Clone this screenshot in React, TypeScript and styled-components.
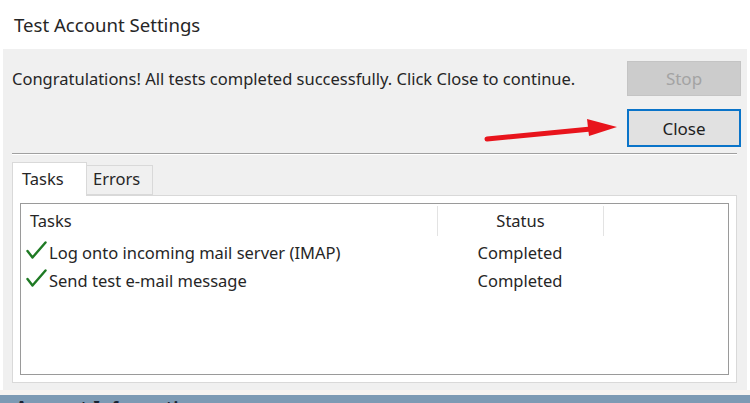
import styled, { createGlobalStyle } from 'styled-components';

const GlobalStyle = createGlobalStyle`
  html, body {
    margin: 0;
    padding: 0;
    background: #ffffff;
  }
  body {
    font-family: "Noto Sans", "Open Sans", sans-serif;
    color: #1e1e1e;
  }
`;

interface Task {
  name: string;
  status: string;
}

const tasks: Task[] = [
  { name: 'Log onto incoming mail server (IMAP)', status: 'Completed' },
  { name: 'Send test e-mail message', status: 'Completed' },
];

const CheckIcon = () => (
  <svg width="21" height="19" viewBox="0 0 21 19">
    <path
      d="M1.5 10 L6.5 16.5 L19.5 1.5"
      fill="none"
      stroke="#1f7a24"
      strokeWidth="2.4"
      strokeLinecap="round"
      strokeLinejoin="round"
    />
  </svg>
);

const App = () => {
  return (
    <>
      <GlobalStyle />
      <Page>
        <TitleBar>Test Account Settings</TitleBar>
        <Dialog>
          <TopRow>
            <Message>
              Congratulations! All tests completed successfully. Click Close to continue.
            </Message>
            <Buttons>
              <Button disabled>Stop</Button>
              <Button $primary>Close</Button>
            </Buttons>
            <Arrow width="140" height="30" viewBox="0 0 140 30">
              <path d="M4 24 L108 14" stroke="#e8141c" strokeWidth="5" strokeLinecap="round" />
              <path d="M104 4 L134 12 L106 21 Z" fill="#e8141c" />
            </Arrow>
          </TopRow>
          <Separator />
          <TabStrip>
            <Tab $active>Tasks</Tab>
            <Tab>Errors</Tab>
          </TabStrip>
          <TabPanel>
            <ListBox>
              <HeaderRow>
                <HeadCell>Tasks</HeadCell>
                <HeadCell $center $divider>Status</HeadCell>
                <HeadCell $divider />
              </HeaderRow>
              {tasks.map((t) => (
                <Row key={t.name}>
                  <NameCell>
                    <CheckIcon />
                    <span>{t.name}</span>
                  </NameCell>
                  <StatusCell>{t.status}</StatusCell>
                  <div />
                </Row>
              ))}
            </ListBox>
          </TabPanel>
        </Dialog>
        <Footer>
          <FooterText>Account Information</FooterText>
        </Footer>
      </Page>
    </>
  );
};

export default App;

const Page = styled.div`
  width: 750px;
  height: 403px;
  overflow: hidden;
  display: flex;
  flex-direction: column;
`;

const TitleBar = styled.div`
  height: 49px;
  box-sizing: border-box;
  padding: 12px 0 0 14px;
  font-size: 18.6px;
  color: #262626;
`;

const Dialog = styled.div`
  margin: 0 3px;
  background: #f0f0f0;
  display: flex;
  flex-direction: column;
  padding: 12px 6px 7px 9px;
`;

const TopRow = styled.div`
  position: relative;
  display: flex;
  justify-content: space-between;
  align-items: flex-start;
`;

const Message = styled.div`
  font-size: 16.5px;
  line-height: 22px;
  margin-top: 7px;
  color: #262626;
`;

const Buttons = styled.div`
  display: flex;
  flex-direction: column;
  gap: 13px;
`;

const Button = styled.button<{ $primary?: boolean }>`
  width: 114px;
  height: ${(p) => (p.$primary ? '38px' : '35px')};
  box-sizing: border-box;
  font-family: "Noto Sans", "Open Sans", sans-serif;
  font-size: 17px;
  background: ${(p) => (p.$primary ? '#e1e1e1' : '#cccccc')};
  color: ${(p) => (p.$primary ? '#1e1e1e' : '#a3a3a3')};
  border: ${(p) => (p.$primary ? '2px solid #0a74c9' : '1px solid #c4c4c4')};
  padding: 0;
`;

const Arrow = styled.svg`
  position: absolute;
  left: 471px;
  top: 54px;
`;

const Separator = styled.div`
  margin: 6px 4px 0 0;
  height: 1px;
  background: #a0a0a0;
  border-bottom: 1px solid #ffffff;
`;

const TabStrip = styled.div`
  display: flex;
  align-items: flex-end;
  margin: 7px 0 0 0;
  height: 33px;
`;

const Tab = styled.div<{ $active?: boolean }>`
  box-sizing: border-box;
  width: ${(p) => (p.$active ? '75px' : '66px')};
  height: ${(p) => (p.$active ? '34px' : '30px')};
  margin-bottom: ${(p) => (p.$active ? '-1px' : '0')};
  padding: ${(p) => (p.$active ? '4px 0 0 9px' : '1px 0 0 6px')};
  background: ${(p) => (p.$active ? '#ffffff' : '#f0f0f0')};
  border: 1px solid #d9d9d9;
  border-bottom: ${(p) => (p.$active ? 'none' : '1px solid #d9d9d9')};
  border-left: ${(p) => (p.$active ? '1px solid #d9d9d9' : 'none')};
  font-size: 16.5px;
  color: #262626;
  position: relative;
  z-index: ${(p) => (p.$active ? 1 : 0)};
`;

const TabPanel = styled.div`
  margin: 0 4px 0 0;
  background: #ffffff;
  border: 1px solid #d9d9d9;
  padding: 7px 7px 7px 7px;
`;

const ListBox = styled.div`
  height: 170px;
  border: 1px solid #9a9a9a;
  background: #ffffff;
`;

const columns = '416px 166px 1fr';

const HeaderRow = styled.div`
  display: grid;
  grid-template-columns: ${columns};
  height: 34px;
  align-items: center;
`;

const HeadCell = styled.div<{ $center?: boolean; $divider?: boolean }>`
  height: 30px;
  line-height: 30px;
  padding-left: ${(p) => (p.$center ? '0' : '9px')};
  text-align: ${(p) => (p.$center ? 'center' : 'left')};
  border-left: ${(p) => (p.$divider ? '1px solid #e3e3e3' : 'none')};
  font-size: 16.5px;
  color: #262626;
`;

const Row = styled.div`
  display: grid;
  grid-template-columns: ${columns};
  height: 28px;
  align-items: center;
  font-size: 16.5px;
  color: #262626;
`;

const NameCell = styled.div`
  display: flex;
  align-items: center;
  gap: 2px;
  padding-left: 5px;

  svg {
    flex: none;
    margin-top: -3px;
  }
`;

const StatusCell = styled.div`
  text-align: center;
`;

const Footer = styled.div`
  flex: 1;
  border-top: 5px solid #f6f3f1;
  background: #7d9ab4;
  overflow: hidden;
`;

const FooterText = styled.div`
  margin: 2px 0 0 16px;
  font-size: 16px;
  line-height: 20px;
  font-weight: bold;
  color: #1a2433;
  letter-spacing: 1px;
`;
